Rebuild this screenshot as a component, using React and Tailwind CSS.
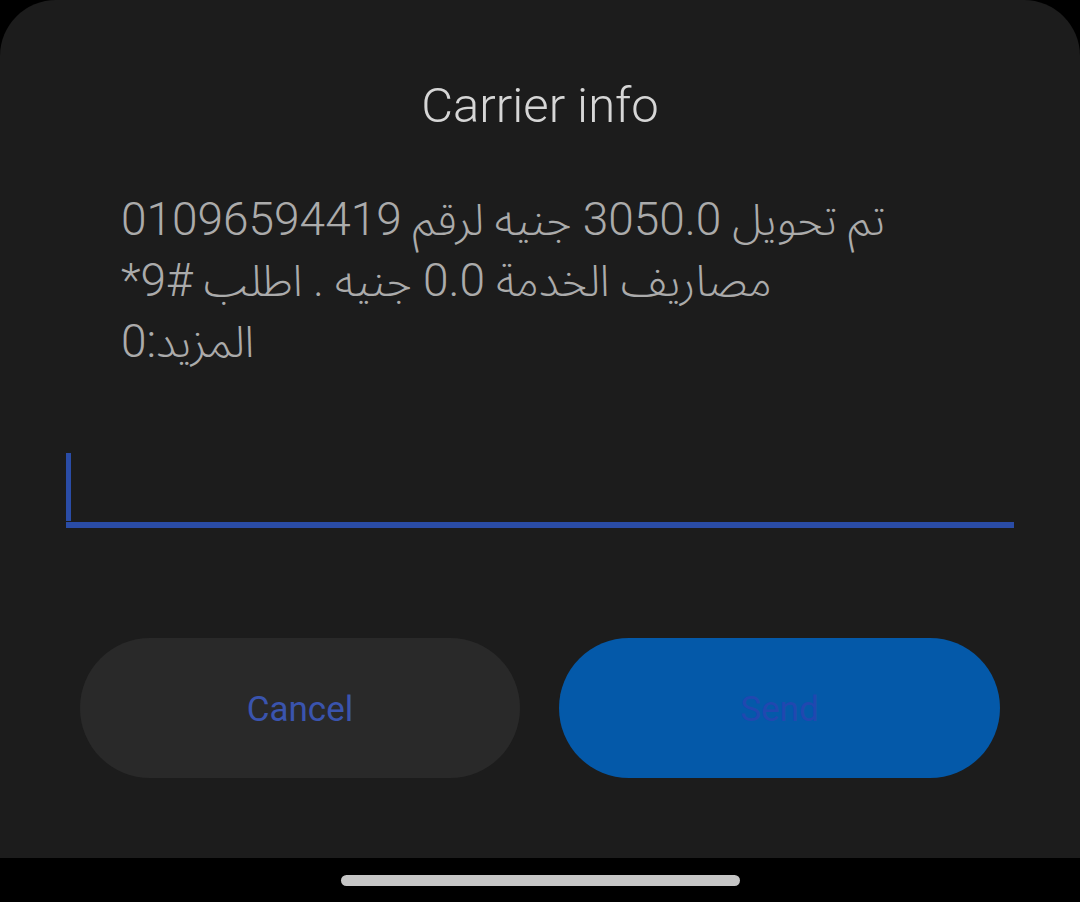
import React from 'react';

const font = { fontFamily: 'Roboto, "Noto Sans Arabic", "DejaVu Sans", sans-serif' };

function Num({ children }) {
  return <span className="text-[46px] leading-none">{children}</span>;
}

export default function App() {
  return (
    <div className="w-[1080px] h-[902px] bg-black flex flex-col overflow-hidden" style={font}>
      {/* dialog sheet */}
      <div className="h-[858px] bg-[#1c1c1c] rounded-t-[56px] flex flex-col">
        <h1 className="pt-[77px] text-center text-[49px] leading-[58px] font-light text-[#d6d6d6]">
          Carrier info
        </h1>

        <div className="mt-[55px] pl-[121px] pr-[120px] text-[44px] leading-[61px] font-light text-[#ababab]">
          <div dir="rtl" className="h-[61px] text-left whitespace-nowrap">
            تم تحويل <Num>3050.0</Num> جنيه لرقم <Num>01096594419</Num>
          </div>
          <div dir="rtl" className="h-[61px] text-left whitespace-nowrap">
            مصاريف الخدمة <Num>0.0</Num> جنيه . اطلب <bdi dir="ltr" className="text-[46px] leading-none">*9#</bdi>
          </div>
          <div dir="rtl" className="h-[61px] text-left whitespace-nowrap">
            المزيد<Num>:0</Num>
          </div>
        </div>

        {/* input field */}
        <div className="mt-[77px] mx-[66px] h-[78px] flex flex-col">
          <div className="flex-1 pt-[3px]">
            <div className="w-[5px] h-[68px] bg-[#2a4ca6]"></div>
          </div>
          <div className="h-[6px] bg-[#2a4ca6]"></div>
        </div>

        {/* buttons */}
        <div className="mt-[110px] px-[80px] flex gap-[39px]">
          <button className="w-[440px] h-[140px] pt-[4px] rounded-full bg-[#292929] text-[35px] text-[#3a54ae]">
            Cancel
          </button>
          <button className="w-[441px] h-[140px] pt-[4px] rounded-full bg-[#0459a9] text-[35px] text-[#2148b0]">
            Send
          </button>
        </div>
      </div>

      {/* nav bar */}
      <div className="flex-1 flex items-center justify-center">
        <div className="w-[399px] h-[11px] rounded-full bg-[#c6c6c6]"></div>
      </div>
    </div>
  );
}
